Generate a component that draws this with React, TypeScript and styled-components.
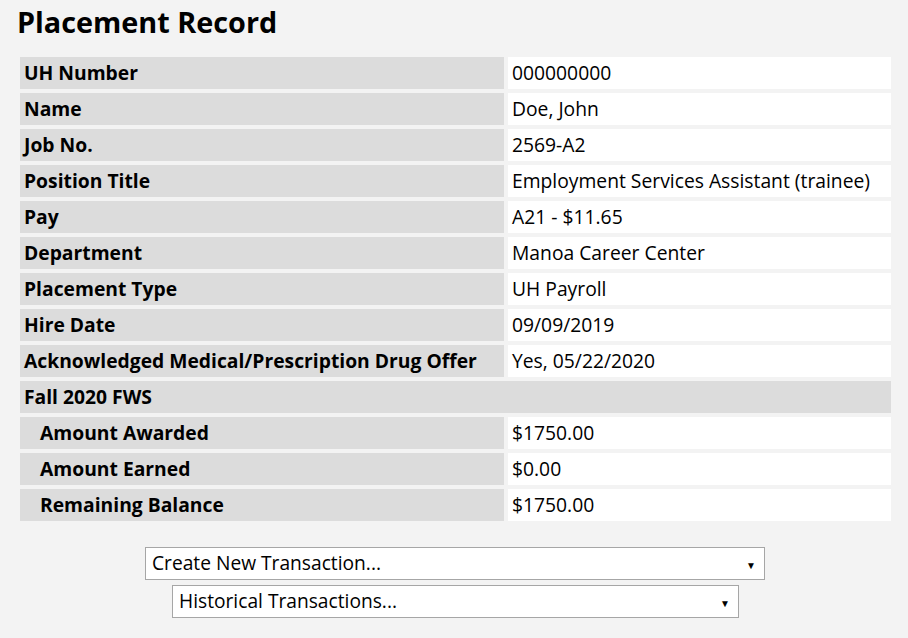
import React, {ReactElement} from "react";
import styled, {createGlobalStyle} from "styled-components";

const GlobalStyle = createGlobalStyle`
    html, body {
        margin: 0;
        padding: 0;
        background: #f3f3f3;
        font-family: "Open Sans", "Noto Sans", sans-serif;
        color: #000;
    }
`;

const Page = styled.div`
    padding: 0 16px 20px 16px;
    width: 876px;
`;

const Title = styled.h1`
    margin: 0;
    padding: 4px 0 0 1px;
    font-size: 28.8px;
    font-weight: 700;
    line-height: 36px;
`;

const Table = styled.div`
    margin-top: 13px;
    display: grid;
    grid-template-columns: 484px 383px;
    gap: 4px;
    padding: 4px;
`;

const Label = styled.div<{ $indent?: boolean; $span?: boolean }>`
    background: #dcdcdc;
    height: 32px;
    line-height: 31px;
    font-size: 19.3px;
    font-weight: 700;
    padding-left: ${p => p.$indent ? "20px" : "4px"};
    grid-column: ${p => p.$span ? "1 / -1" : "auto"};
    white-space: nowrap;
`;

const Value = styled.div`
    background: #fff;
    height: 32px;
    line-height: 31px;
    font-size: 19.3px;
    padding-left: 4px;
    white-space: nowrap;
`;

const Actions = styled.div`
    margin-top: 22px;
    display: flex;
    flex-direction: column;
    align-items: center;
    gap: 5px;
`;

const SelectWrap = styled.div<{ $width: number; $shift: number }>`
    position: relative;
    width: ${p => p.$width}px;
    margin-left: ${p => p.$shift}px;
`;

const Select = styled.select`
    appearance: none;
    -webkit-appearance: none;
    width: 100%;
    height: 33px;
    box-sizing: border-box;
    border: 1px solid #a6a6a6;
    background: #fff;
    font-family: "Open Sans", "Noto Sans", sans-serif;
    font-size: 19.2px;
    color: #000;
    padding: 0 24px 2px 6px;
    border-radius: 0;
    outline: none;
`;

const Arrow = styled.span`
    position: absolute;
    right: 9px;
    top: 50%;
    transform: translateY(-45%);
    font-size: 10px;
    pointer-events: none;
`;

type Row = { label: string; value?: string; indent?: boolean; span?: boolean };

const ROWS: Row[] = [
    {label: "UH Number", value: "000000000"},
    {label: "Name", value: "Doe, John"},
    {label: "Job No.", value: "2569-A2"},
    {label: "Position Title", value: "Employment Services Assistant (trainee)"},
    {label: "Pay", value: "A21 - $11.65"},
    {label: "Department", value: "Manoa Career Center"},
    {label: "Placement Type", value: "UH Payroll"},
    {label: "Hire Date", value: "09/09/2019"},
    {label: "Acknowledged Medical/Prescription Drug Offer", value: "Yes, 05/22/2020"},
    {label: "Fall 2020 FWS", span: true},
    {label: "Amount Awarded", value: "$1750.00", indent: true},
    {label: "Amount Earned", value: "$0.00", indent: true},
    {label: "Remaining Balance", value: "$1750.00", indent: true},
];

const App = (): ReactElement => {
    return (
        <>
            <GlobalStyle/>
            <Page>
                <Title>Placement Record</Title>
                <Table>
                    {ROWS.map(row => (
                        <React.Fragment key={row.label}>
                            <Label $indent={row.indent} $span={row.span}>{row.label}</Label>
                            {!row.span && <Value>{row.value}</Value>}
                        </React.Fragment>
                    ))}
                </Table>
                <Actions>
                    <SelectWrap $width={620} $shift={2}>
                        <Select defaultValue="">
                            <option value="">Create New Transaction...</option>
                        </Select>
                        <Arrow>▼</Arrow>
                    </SelectWrap>
                    <SelectWrap $width={567} $shift={3}>
                        <Select defaultValue="">
                            <option value="">Historical Transactions...</option>
                        </Select>
                        <Arrow>▼</Arrow>
                    </SelectWrap>
                </Actions>
            </Page>
        </>
    )
}

export default App;
